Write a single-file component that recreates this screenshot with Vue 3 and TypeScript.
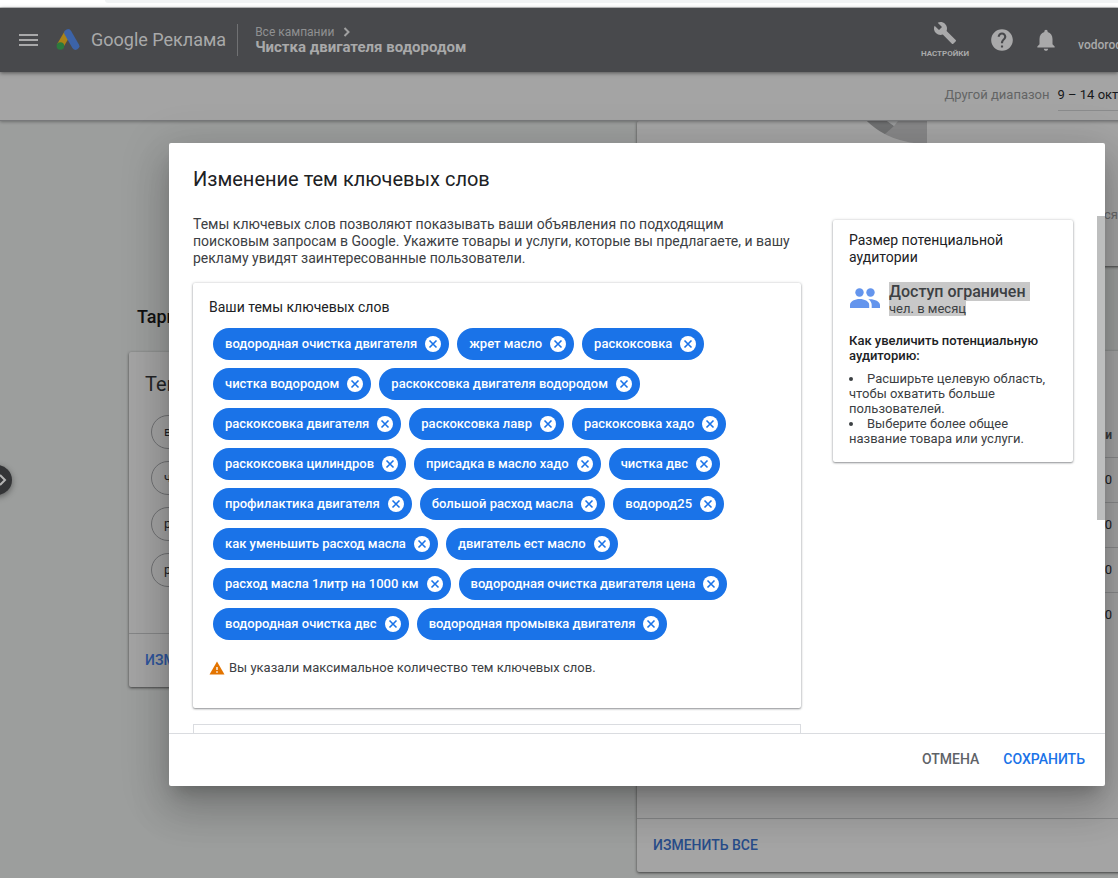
<script setup lang="ts">
import { ref } from 'vue'

const themes = ref<string[]>([
  'водородная очистка двигателя',
  'жрет масло',
  'раскоксовка',
  'чистка водородом',
  'раскоксовка двигателя водородом',
  'раскоксовка двигателя',
  'раскоксовка лавр',
  'раскоксовка хадо',
  'раскоксовка цилиндров',
  'присадка в масло хадо',
  'чистка двс',
  'профилактика двигателя',
  'большой расход масла',
  'водород25',
  'как уменьшить расход масла',
  'двигатель ест масло',
  'расход масла 1литр на 1000 км',
  'водородная очистка двигателя цена',
  'водородная очистка двс',
  'водородная промывка двигателя',
])

const previewThemes: string[] = ['водород25', 'чистка двс', 'раскоксовка', 'расход масла']

const counts: number[] = [0, 0, 0, 0]

function removeTheme(index: number): void {
  themes.value.splice(index, 1)
}
</script>

<template>
  <div class="page">
    <div class="browser"><div class="address"></div></div>

    <header class="appbar">
      <button class="icon-btn menu" aria-label="Меню">
        <svg width="20" height="14" viewBox="0 0 20 14"><path d="M0 2h19M0 7h19M0 12h19" stroke="#a9a9aa" stroke-width="2" /></svg>
      </button>
      <svg class="logo" width="24" height="22" viewBox="0 0 24 22">
        <path d="M11.5 4.2 4.2 16.8" stroke="#a98217" stroke-width="7" />
        <path d="M12 4 19.5 17" stroke="#3c63a8" stroke-width="7.5" stroke-linecap="round" />
        <circle cx="4.4" cy="17" r="3.8" fill="#2b7a3d" />
      </svg>
      <a class="brand" href="#">Google Реклама</a>
      <div class="crumbs">
        <a class="crumb" href="#">Все кампании
          <svg width="7" height="10" viewBox="0 0 7 10"><path d="M1.5 1 5.5 5l-4 4" fill="none" stroke="#a0a0a1" stroke-width="2" /></svg>
        </a>
        <strong class="campaign">Чистка двигателя водородом</strong>
      </div>
      <div class="tools">
        <button class="icon-btn settings">
          <svg width="24" height="24" viewBox="0 0 24 24"><path fill="#a9a9aa" d="M22.7 19l-9.1-9.1c.9-2.3.4-5-1.5-6.9-2-2-5-2.4-7.4-1.3L9 6 6 9 1.6 4.7C.4 7.1.9 10.1 2.9 12.1c1.9 1.9 4.6 2.4 6.9 1.5l9.1 9.1c.4.4 1 .4 1.4 0l2.3-2.3c.5-.4.5-1.1.1-1.4z" /></svg>
          <span>НАСТРОЙКИ</span>
        </button>
        <button class="icon-btn help" aria-label="Справка">
          <svg width="26" height="26" viewBox="0 0 24 24"><path fill="#a9a9aa" d="M12 2C6.48 2 2 6.48 2 12s4.48 10 10 10 10-4.480 10-10S17.520 2 12 2zm1 17h-2v-2h2v2zm2.070-7.750l-.9.920C13.450 12.900 13 13.500 13 15h-2v-.5c0-1.100.450-2.100 1.170-2.830l1.240-1.260c.370-.360.590-.860.590-1.410 0-1.100-.9-2-2-2s-2 .9-2 2H8c0-2.210 1.790-4 4-4s4 1.790 4 4c0 .880-.360 1.680-.930 2.250z" /></svg>
        </button>
        <button class="icon-btn bell" aria-label="Уведомления">
          <svg width="26" height="26" viewBox="0 0 24 24"><path fill="#a9a9aa" d="M12 22c1.100 0 2-.9 2-2h-4c0 1.100.890 2 2 2zm6-6v-5c0-3.070-1.640-5.640-4.500-6.320V4c0-.830-.670-1.500-1.500-1.500s-1.500.670-1.500 1.500v.680C7.630 5.360 6 7.920 6 11v5l-2 2v1h16v-1l-2-2z" /></svg>
        </button>
        <span class="account">vodorod</span>
      </div>
    </header>

    <div class="datebar">
      <span class="range-label">Другой диапазон</span>
      <button class="range">9 – 14 октября</button>
    </div>

    <main class="content">
      <section class="left">
        <h2 class="section-title">Таргетинг</h2>
        <div class="card targeting">
          <h3 class="card-title">Темы</h3>
          <div class="outlines">
            <span v-for="name in previewThemes" :key="name" class="outline-chip">{{ name }}</span>
          </div>
          <div class="card-foot"><button class="link-btn bright">ИЗМЕНИТЬ</button></div>
        </div>
      </section>

      <section class="right">
        <div class="card chart">
          <svg width="60" height="23" viewBox="0 0 60 23">
            <path d="M0 0Q22 22 60 23V0z" fill="#878788" />
            <path d="M0 0Q7 7 18 13L27 5 20 0z" fill="#707172" />
            <path d="M20 0 27 5 31 0z" fill="#9b9c9d" />
          </svg>
          <span class="legend">ся</span>
        </div>
        <div class="card stats">
          <table>
            <thead><tr><th>Показы и</th></tr></thead>
            <tbody><tr v-for="(n, i) in counts" :key="i"><td>{{ n }}</td></tr></tbody>
          </table>
          <div class="card-foot"><button class="link-btn">ИЗМЕНИТЬ ВСЕ</button></div>
        </div>
      </section>
    </main>

    <button class="handle" aria-label="Развернуть панель">
      <svg width="8" height="12" viewBox="0 0 8 12"><path d="M1 1 6 6l-5 5" fill="none" stroke="#b4b4b4" stroke-width="2" /></svg>
    </button>

    <div class="overlay">
      <div class="dialog" role="dialog" aria-labelledby="dialog-title">
        <h1 id="dialog-title">Изменение тем ключевых слов</h1>
        <div class="body">
          <div class="form">
            <p class="intro">Темы ключевых слов позволяют показывать ваши объявления по подходящим поисковым запросам в Google. Укажите товары и услуги, которые вы предлагаете, и вашу рекламу увидят заинтересованные пользователи.</p>
            <div class="panel themes">
              <h2>Ваши темы ключевых слов</h2>
              <ul class="chips">
                <li v-for="(name, i) in themes" :key="name" class="chip">
                  <span>{{ name }}</span>
                  <button :aria-label="'Удалить ' + name" @click="removeTheme(i)">
                    <svg width="16" height="16" viewBox="0 0 16 16"><circle cx="8" cy="8" r="8" fill="#fff" /><path d="M4.500 4.500l7 7M11.500 4.500l-7 7" stroke="#1a73e8" stroke-width="1.600" /></svg>
                  </button>
                </li>
              </ul>
              <p class="warning">
                <svg width="16" height="14" viewBox="0 0 16 14"><path d="M8 0.500 15.500 13.500H.5z" fill="#e37400" /><path d="M7.300 6h1.400v3H7.300zM7.300 10.300h1.400v1.400H7.300z" fill="#fff" /></svg>
                Вы указали максимальное количество тем ключевых слов.
              </p>
            </div>
            <div class="next-panel"></div>
          </div>

          <aside class="panel audience">
            <h2>Размер потенциальной аудитории</h2>
            <div class="reach">
              <svg width="32" height="32" viewBox="0 0 32 32">
                <g fill="#6495ed">
                  <circle cx="10.500" cy="10.500" r="4.200" />
                  <circle cx="21.500" cy="10.500" r="4.200" />
                  <path d="M1 26v-3c0-3.700 5-5.900 9.700-5.900s9.500 2.200 9.500 5.900v3z" />
                  <path d="M19.300 17.300c5.400-.6 11.700 1.700 11.700 5.700v3h-8.300v-3c0-2.500-1.400-4.400-3.400-5.700z" />
                </g>
              </svg>
              <div class="reach-text">
                <strong>Доступ ограничен&nbsp;</strong>
                <span>чел. в месяц</span>
              </div>
            </div>
            <h3>Как увеличить потенциальную аудиторию:</h3>
            <ul class="tips">
              <li>Расширьте целевую область, чтобы охватить больше пользователей.</li>
              <li>Выберите более общее название товара или услуги.</li>
            </ul>
          </aside>
        </div>
        <div class="scrollbar"></div>
        <footer class="actions">
          <button class="cancel">ОТМЕНА</button>
          <button class="save">СОХРАНИТЬ</button>
        </footer>
      </div>
    </div>
  </div>
</template>

<style>
body {
  margin: 0;
  background: #9c9e9d;
}
</style>

<style scoped>
.page {
  position: relative;
  height: 100vh;
  overflow: hidden;
  background: #9c9e9d;
  color: #202124;
  font-family: Roboto, "Liberation Sans", sans-serif;
  font-size: 13px;
}
.page * { box-sizing: border-box; }
h1, h2, h3, p, ul { margin: 0; padding: 0; font-weight: 400; }
ul { list-style: none; }
svg { display: block; flex: none; }
button { border: 0; padding: 0; background: none; font: inherit; color: inherit; cursor: pointer; white-space: nowrap; }
a { color: inherit; text-decoration: none; }

.browser { height: 8px; background: #fff; border-bottom: 1px solid #c8c9ca; padding-left: 105px; }
.address { height: 3px; background: #f1f3f4; border-bottom-left-radius: 12px; }

.appbar {
  position: relative;
  z-index: 2;
  display: flex;
  align-items: center;
  height: 64px;
  padding-left: 19px;
  background: #48494c;
  color: #a9a9aa;
  box-shadow: 0 1px 4px rgba(0, 0, 0, 0.5);
}
.logo { margin: 0 11px 0 17px; }
.brand { font-size: 18px; line-height: 24px; white-space: nowrap; }
.crumbs {
  display: flex;
  flex-direction: column;
  justify-content: center;
  height: 32px;
  margin-left: 11px;
  padding-left: 17px;
  border-left: 1px solid #707173;
  white-space: nowrap;
}
.crumb { display: flex; align-items: center; gap: 9px; font-size: 12px; line-height: 14px; color: #8f9091; }
.campaign { font-size: 15px; line-height: 17px; font-weight: 700; }
.tools { display: flex; align-items: center; flex: none; margin-left: auto; margin-right: -4px; }
.settings { display: flex; flex-direction: column; align-items: center; gap: 4px; margin-right: 20px; font-size: 8px; line-height: 10px; font-weight: 700; }
.help { margin-right: 18px; }
.bell { margin-right: 19px; }
.account { padding-top: 9px; font-size: 12px; font-weight: 500; line-height: 14px; }

.datebar {
  position: relative;
  z-index: 1;
  display: flex;
  justify-content: flex-end;
  height: 49px;
  padding-top: 14px;
  margin-right: -29px;
  background: #a4a4a4;
  border-bottom: 1px solid #77787a;
  box-shadow: 0 1px 3px rgba(0, 0, 0, 0.3);
}
.range-label { margin-right: 8px; line-height: 18px; color: #636465; }
.range { height: 25px; padding-bottom: 7px; border-bottom: 1px solid #8b8c8d; line-height: 18px; color: #17181a; }

.content { display: grid; grid-template-columns: 484px 1fr; gap: 24px; margin: 0 -40px 0 129px; }
.card { background: #a4a4a4; border-radius: 2px; box-shadow: 0 1px 3px rgba(0, 0, 0, 0.6); }
.left { padding-top: 185px; }
.section-title { padding-left: 8px; font-size: 18px; line-height: 22px; font-weight: 500; color: #111; }
.targeting { margin-top: 24px; }
.card-title { padding: 19px 16px 18px; font-size: 20px; line-height: 26px; color: #232427; }
.outlines { display: flex; flex-direction: column; align-items: flex-start; gap: 12px; height: 218px; padding: 0 22px; }
.outline-chip { height: 34px; padding: 0 12px; border: 1px solid #717274; border-radius: 17px; line-height: 32px; }
.card-foot { display: flex; align-items: center; height: 54px; padding: 0 16px 2px; border-top: 1px solid #858687; }
.link-btn { font-size: 14px; line-height: 20px; font-weight: 500; color: #284c89; }
.bright { color: #2e559d; }

.right { min-width: 0; }
.chart { position: relative; height: 145px; padding-left: 230px; }
.legend { position: absolute; top: 85px; right: 40px; line-height: 18px; color: #67686a; }
.stats { display: flex; flex-direction: column; height: 521px; margin-top: 85px; }
.stats table { width: 100%; border-collapse: collapse; }
.stats th { height: 106px; padding: 0 46px 14px 0; border-bottom: 1px solid #898a8b; text-align: right; vertical-align: bottom; font-weight: 700; font-size: 12px; line-height: 16px; color: #38393b; }
.stats td { height: 45px; padding: 0 46px 0 0; border-bottom: 1px solid #898a8b; text-align: right; }
.stats tr:last-child td { border-bottom: 0; }
.stats .card-foot { margin-top: auto; }

.handle {
  position: absolute;
  left: -18px;
  top: 465px;
  display: flex;
  align-items: center;
  justify-content: flex-end;
  width: 30px;
  height: 30px;
  padding-right: 5px;
  border-radius: 50%;
  background: #343537;
  box-shadow: 0 2px 6px rgba(0, 0, 0, 0.4);
}

.overlay { position: absolute; z-index: 3; inset: 0; display: flex; padding: 143px 13px 92px 169px; }
.dialog {
  position: relative;
  display: flex;
  flex-direction: column;
  flex: 1;
  min-width: 0;
  background: #fff;
  border-radius: 2px;
  box-shadow: 0 11px 15px -7px rgba(0, 0, 0, 0.2), 0 24px 38px 3px rgba(0, 0, 0, 0.14), 0 9px 46px 8px rgba(0, 0, 0, 0.12);
}
h1 { padding: 24px 24px 0; font-size: 20px; line-height: 24px; }
.body { display: flex; align-items: flex-start; gap: 32px; flex: 1; min-height: 0; margin-top: 25px; padding: 0 32px 0 24px; overflow: hidden; }
.form { flex: 1; min-width: 0; }
.intro { font-size: 14px; line-height: 17px; color: #3c4043; }
.panel { border-radius: 2px; background: #fff; box-shadow: 0 1px 2px rgba(60, 64, 67, 0.5), 0 0 3px rgba(60, 64, 67, 0.25); }
.themes { height: 425px; margin-top: 16px; padding: 16px; }
.panel h2 { font-size: 14px; line-height: 17px; }
.chips { display: flex; flex-wrap: wrap; gap: 8px; margin-top: 12px; padding-left: 4px; }
.chip { display: flex; align-items: center; gap: 8px; height: 32px; padding: 0 8px 1px 12px; border-radius: 16px; background: #1a73e8; color: #fff; font-weight: 500; white-space: nowrap; }
.warning { display: flex; align-items: center; gap: 4px; margin-top: 19px; line-height: 18px; color: #3c4043; }
.next-panel { height: 80px; margin-top: 16px; border: 1px solid #dadce0; }

.audience { flex: none; width: 240px; margin-top: 4px; padding: 12px 16px 16px; }
.reach { display: flex; gap: 8px; margin-top: 16px; }
.reach-text { display: flex; flex-direction: column; align-items: flex-start; color: #3c4043; white-space: nowrap; }
.reach-text strong { background: #c8c8c8; font-size: 16px; line-height: 19px; font-weight: 500; }
.reach-text span { background: #c8c8c8; line-height: 15px; }
.audience h3 { margin-top: 17px; font-size: 13px; line-height: 15px; font-weight: 500; }
.tips { margin-top: 8px; line-height: 15px; color: #3c4043; list-style: disc inside; }

.scrollbar { position: absolute; top: 73px; right: 0; width: 8px; height: 304px; background: #bdbebe; }
.actions { display: flex; justify-content: flex-end; align-items: center; gap: 24px; height: 53px; padding: 0 20px 2px; border-top: 1px solid #dadce0; font-size: 14px; font-weight: 500; }
.cancel { color: #5f6368; }
.save { color: #1a73e8; }
</style>
